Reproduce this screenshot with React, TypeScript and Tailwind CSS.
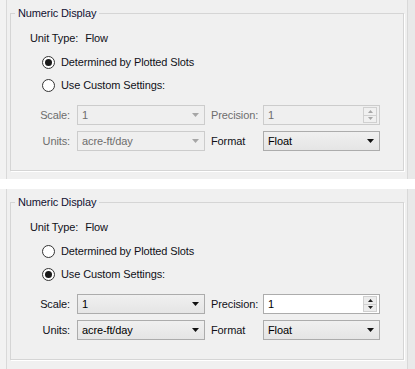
import React from 'react';

const FONT = "font-['Liberation_Sans',Arial,sans-serif] text-[11px] tracking-[-0.12px]";

function Arrow({ disabled }: { disabled?: boolean }) {
  return (
    <svg width="7" height="4" viewBox="0 0 7 4" className="shrink-0">
      <polygon points="0,0 7,0 3.5,4" fill={disabled ? '#a6a6a6' : '#111111'} />
    </svg>
  );
}

function Combo({ value, disabled, width }: { value: string; disabled?: boolean; width: string }) {
  return (
    <div
      className={`${width} h-[20px] flex items-center justify-between pl-[4px] pr-[5px] border ${
        disabled
          ? 'border-[#cccccc] bg-[#efefef] text-[#6d6d6d]'
          : 'border-[#acacac] bg-gradient-to-b from-[#f0f0f0] to-[#e5e5e5] text-[#000000]'
      }`}
    >
      <span>{value}</span>
      <Arrow disabled={disabled} />
    </div>
  );
}

function Spin({ value, disabled }: { value: string; disabled?: boolean }) {
  const tri = disabled ? '#a6a6a6' : '#222222';
  return (
    <div
      className={`w-[117px] h-[20px] flex items-center justify-between pl-[4px] pr-[2px] border ${
        disabled ? 'border-[#cccccc] bg-[#efefef] text-[#6d6d6d]' : 'border-[#acacac] bg-white text-[#000000]'
      }`}
    >
      <span>{value}</span>
      <div className="flex flex-col w-[14px] h-[16px] border border-[#d0d0d0]">
        <div className={`flex-1 flex items-center justify-center border-b border-[#d0d0d0] ${disabled ? 'bg-[#f0f0f0]' : 'bg-[#ececec]'}`}>
          <svg width="5" height="3" viewBox="0 0 5 3">
            <polygon points="0,3 5,3 2.5,0" fill={tri} />
          </svg>
        </div>
        <div className={`flex-1 flex items-center justify-center ${disabled ? 'bg-[#f0f0f0]' : 'bg-[#ececec]'}`}>
          <svg width="5" height="3" viewBox="0 0 5 3">
            <polygon points="0,0 5,0 2.5,3" fill={tri} />
          </svg>
        </div>
      </div>
    </div>
  );
}

function Radio({ checked, label, className }: { checked?: boolean; label: string; className: string }) {
  return (
    <div className={`flex items-center h-[16px] ml-[12px] ${className}`}>
      <div className="w-[13px] h-[13px] rounded-full border border-[#333333] bg-white flex items-center justify-center">
        {checked && <div className="w-[7px] h-[7px] rounded-full bg-[#1a1a1a]" />}
      </div>
      <span className="ml-[6px] text-[#111118]">{label}</span>
    </div>
  );
}

function Panel({ custom, height }: { custom?: boolean; height: string }) {
  const dis = !custom;
  const lbl = dis ? 'text-[#6d6d6d]' : 'text-[#111118]';
  return (
    <div className={`flex ${height} bg-[#f0f0f0]`}>
      <div className="w-[7px] border-r border-[#d9d9d9] bg-[#f2f2f2]" />
      <div className="flex-1 px-[3px]">
        <fieldset className="mt-[6px] h-[165px] border border-[#d5d5d5] shadow-[1px_1px_0_#ffffff]">
          <legend className="ml-[4px] px-[3px] leading-[14px] text-[#101030]">Numeric Display</legend>
          <div className="pl-[19px] pt-[10px] flex flex-col">
            <div className="flex items-center h-[16px] text-[#111118]">
              <span>Unit Type:</span>
              <span className="ml-[7px]">Flow</span>
            </div>
            <Radio checked={!custom} label="Determined by Plotted Slots" className="mt-[8px]" />
            <Radio checked={custom} label="Use Custom Settings:" className="mt-[7px]" />
            <div className="flex items-center h-[20px] mt-[12px]">
              <span className={`w-[40px] text-right ${lbl}`}>Scale:</span>
              <div className="ml-[7px]">
                <Combo value="1" disabled={dis} width="w-[128px]" />
              </div>
              <span className={`ml-[6px] w-[52px] ${lbl}`}>Precision:</span>
              <Spin value="1" disabled={dis} />
            </div>
            <div className="flex items-center h-[20px] mt-[6px]">
              <span className={`w-[40px] text-right ${lbl}`}>Units:</span>
              <div className="ml-[7px]">
                <Combo value="acre-ft/day" disabled={dis} width="w-[128px]" />
              </div>
              <span className="ml-[6px] w-[52px] text-[#111118]">Format</span>
              <Combo value="Float" width="w-[117px]" />
            </div>
          </div>
        </fieldset>
      </div>
      <div className="w-[8px] border-l border-[#d9d9d9] bg-[#e9e9e9]" />
    </div>
  );
}

export default function App() {
  return (
    <div className={`w-[415px] h-[369px] bg-white ${FONT}`}>
      <Panel height="h-[179px]" />
      <div className="h-[10px] bg-white" />
      <Panel custom height="h-[180px]" />
    </div>
  );
}
